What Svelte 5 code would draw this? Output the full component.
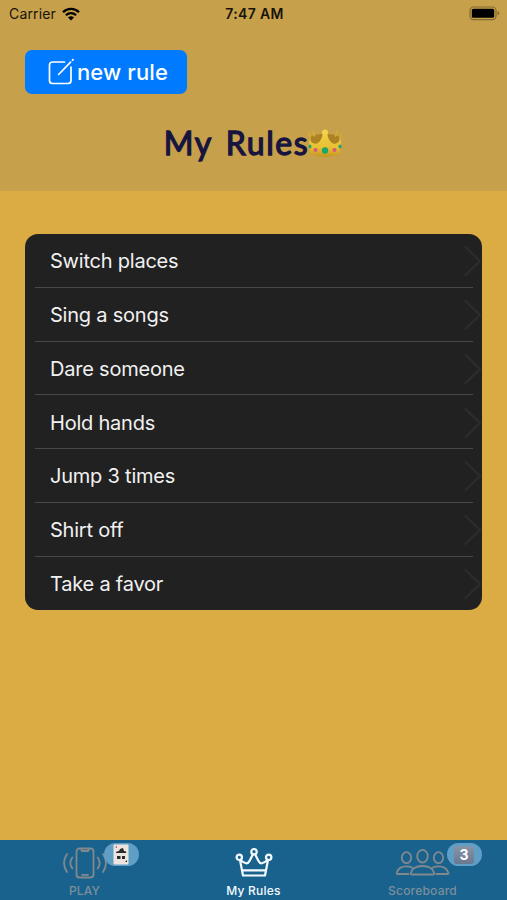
<script lang="ts">
  interface Rule {
    id: number;
    text: string;
  }

  type Tab = "play" | "rules" | "scoreboard";

  let rules: Rule[] = [
    { id: 1, text: "Switch places" },
    { id: 2, text: "Sing a songs" },
    { id: 3, text: "Dare someone" },
    { id: 4, text: "Hold hands" },
    { id: 5, text: "Jump 3 times" },
    { id: 6, text: "Shirt off" },
    { id: 7, text: "Take a favor" },
  ];

  let active = $state<Tab>("rules");
</script>

<div class="screen">
  <header>
    <div class="status">
      <div class="carrier">
        <span>Carrier</span>
        <svg class="wifi" viewBox="0 0 18 14" width="18" height="14">
          <path d="M1 5.2a11.3 11.3 0 0 1 16 0" />
          <path d="M3.9 8.2a7.2 7.2 0 0 1 10.2 0" />
          <path class="fill" d="M9 13.4 6 10.4a4.2 4.2 0 0 1 6 0z" />
        </svg>
      </div>
      <span class="time">7:47 AM</span>
      <svg class="battery" viewBox="0 0 31 15" width="31" height="15">
        <rect class="shell" x="1" y="1" width="26" height="12.6" rx="3.6" />
        <rect x="2.8" y="2.8" width="22.4" height="9" rx="1.6" />
        <path class="cap" d="M28.5 5v4.6q1.8-.8 1.8-2.3T28.5 5z" />
      </svg>
    </div>

    <button type="button" class="new-rule">
      <svg viewBox="0 0 28 28" width="28" height="28">
        <path d="M17.500 4H5.500a3 3 0 0 0-3 3v15.500a3 3 0 0 0 3 3H21a3 3 0 0 0 3-3V9" />
        <path d="m11.600 16.500 12-12.300M25.500 2.200l.6-.6" />
      </svg>
      <span>new rule</span>
    </button>

    <h1>
      <span class="title">My Rules</span>
      <svg class="crown" viewBox="0 0 36 32" width="36" height="32">
        <defs>
          <linearGradient id="gold" x1="0" y1="0" x2="0" y2="1">
            <stop offset="0" stop-color="#f0cf45" />
            <stop offset="0.6" stop-color="#e8c034" />
            <stop offset="1" stop-color="#c4951f" />
          </linearGradient>
        </defs>
        <path class="back" d="M3 9q6-3 12-3h6q6 0 12 3l-4 12H7z" />
        <path class="tips" d="M3.500 16 2.300 6M32.500 16l1.200-10M7.500 8 5.800 3M28.500 8l1.700-5" />
        <path
          fill="url(#gold)"
          d="M1.800 12q4.500 4.500 8.200 3.500 4.500-2 6-10.500h4q1.500 8.500 6 10.500 3.700 1 8.200-3.500L32.600 26q-14.600 6-29.200 0z"
        />
        <circle class="orb" cx="18" cy="4.600" r="3" />
        <circle class="green" cx="18" cy="22.500" r="3.200" />
        <circle class="pink" cx="8.500" cy="22" r="2" />
        <circle class="pink" cx="27.500" cy="22" r="2" />
        <ellipse class="green" cx="3" cy="18.500" rx="1.500" ry="2" />
        <ellipse class="green" cx="33" cy="18.500" rx="1.500" ry="2" />
      </svg>
    </h1>
  </header>

  <main>
    <ul class="rules">
      {#each rules as rule (rule.id)}
        <li>
          <span>{rule.text}</span>
          <svg class="chevron" viewBox="0 0 18 32" width="18" height="32">
            <path d="m1.500 2 14.500 14L1.500 30" />
          </svg>
        </li>
      {/each}
    </ul>
  </main>

  <nav>
    <button type="button" class:active={active === "play"} onclick={() => (active = "play")}>
      <span class="icon">
        <svg viewBox="0 0 46 32" width="46" height="32">
          <rect x="14.500" y="1.500" width="17" height="29" rx="3" />
          <path d="M19 2l.8 2h6.400l.8-2M20 27.800h6M10.300 10.500q-4 5.500 0 11M5 7q-6 9 0 18M35.700 10.500q4 5.500 0 11M41 7q6 9 0 18" />
        </svg>
        <span class="badge">
          <svg class="card" viewBox="0 0 16 21" width="16" height="21">
            <rect class="paper" x=".5" y=".5" width="15" height="20" rx="1" />
            <path class="ink" d="M3 9q0-2 3-2l1-2 3-1 1 3q3 0 2 2zM4 12h3.500v3H4zM9 12h3v3H9z" />
            <path class="red" d="m2 3 2-1v2z" />
            <path class="ink" d="m12 18 2-2v2z" />
          </svg>
        </span>
      </span>
      <span class="label">PLAY</span>
    </button>

    <button type="button" class:active={active === "rules"} onclick={() => (active = "rules")}>
      <span class="icon">
        <svg class="thick" viewBox="0 0 38 32" width="38" height="32">
          <path d="M5 13 8 28.500h22L33 13M5.500 13q6.500 6 9 1l3.300-6.500M32.500 13q-6.500 6-9 1l-3.300-6.500M7.200 23.300h23.600" />
          <circle cx="19" cy="4.700" r="2.700" />
          <circle cx="4.300" cy="10.300" r="2.700" />
          <circle cx="33.700" cy="10.300" r="2.700" />
        </svg>
      </span>
      <span class="label">My Rules</span>
    </button>

    <button
      type="button"
      class:active={active === "scoreboard"}
      onclick={() => (active = "scoreboard")}
    >
      <span class="icon">
        <svg viewBox="0 0 54 32" width="54" height="32">
          <ellipse cx="26.500" cy="9.200" rx="5.300" ry="6.300" />
          <ellipse cx="10.500" cy="10.700" rx="4.700" ry="5.500" />
          <ellipse cx="42.500" cy="10.700" rx="4.700" ry="5.500" />
          <path d="M16 27.500q-1.500 0-1.200-1.500C16 21.500 20.500 19 26.500 19s10.500 2.500 11.700 7q.3 1.500-1.200 1.500zM12.500 27h-11q-1.200 0-.8-1.500C2 21.500 5.500 19.300 10.500 19.300q3.200 0 5.500 1.200M40.500 27h11q1.200 0 .8-1.500c-1.300-4-4.800-6.200-9.800-6.200q-3.200 0-5.500 1.200" />
        </svg>
        <span class="badge wide"><span class="keycap">3</span></span>
      </span>
      <span class="label">Scoreboard</span>
    </button>
  </nav>
</div>

<style>
  :global(body) {
    margin: 0;
  }

  .screen {
    display: flex;
    flex-direction: column;
    height: 900px;
    background: #daac43;
    font-family: Inter, "Liberation Sans", sans-serif;
  }

  header {
    box-sizing: border-box;
    height: 191px;
    background: #c6a04a;
  }

  button {
    border: none;
    font: inherit;
    cursor: pointer;
  }

  svg {
    fill: none;
    stroke-linecap: round;
    stroke-linejoin: round;
  }

  .status {
    display: grid;
    grid-template-columns: 1fr auto 1fr;
    align-items: center;
    height: 27px;
    padding: 0 7px 0 9px;
    font-size: 14px;
    color: #17130a;
  }

  .carrier {
    display: flex;
    align-items: center;
    gap: 6px;
    letter-spacing: 0.15px;
  }

  .wifi path {
    stroke: #000;
    stroke-width: 2.3;
    stroke-linecap: butt;
  }

  .wifi .fill {
    fill: #000;
    stroke: none;
  }

  .time {
    font-weight: 600;
    letter-spacing: 0.35px;
  }

  .battery {
    justify-self: end;
    fill: #000;
  }

  .battery .shell {
    fill: none;
    stroke: #846b33;
    stroke-width: 1.2;
  }

  .battery .cap {
    fill: #846b33;
  }

  .new-rule {
    display: flex;
    align-items: center;
    gap: 2px;
    width: 162px;
    height: 44px;
    margin: 23px 0 0 25px;
    padding: 0 0 0 22px;
    border-radius: 7px;
    background: #007aff;
    color: #fff;
    font-size: 22px;
    font-weight: 500;
    letter-spacing: 0.1px;
    white-space: nowrap;
  }

  .new-rule svg {
    flex-shrink: 0;
    stroke: #fff;
    stroke-width: 1.7;
  }

  h1 {
    display: flex;
    align-items: center;
    justify-content: center;
    height: 44px;
    margin: 26px 0 0;
  }

  .title {
    font-family: "Chalkboard SE", Lato, sans-serif;
    font-size: 32px;
    font-weight: 400;
    letter-spacing: 1.6px;
    word-spacing: 4px;
    color: #17143f;
    -webkit-text-stroke: 1.3px #17143f;
  }

  .crown {
    margin: 4px 0 0 -2px;
  }

  .crown .back {
    fill: #ad8222;
  }

  .crown .tips {
    stroke: #d8ae32;
    stroke-width: 1.6;
  }

  .crown .orb {
    fill: #f1d34c;
  }

  .crown .green {
    fill: #1fa36f;
  }

  .crown .pink {
    fill: #d9577c;
  }

  main {
    flex: 1;
    padding: 43px 25px 0;
  }

  .rules {
    margin: 0;
    padding: 0;
    list-style: none;
    overflow: hidden;
    border-radius: 13px;
    background: #212121;
  }

  li {
    display: flex;
    align-items: center;
    justify-content: space-between;
    box-sizing: border-box;
    height: 53.75px;
    padding: 1px 0 0 25px;
    font-size: 20px;
    letter-spacing: -0.22px;
    color: #f1f1f1;
    background: linear-gradient(#484848, #484848) no-repeat 10px 100% / calc(100% - 19px) 1px;
  }

  li:last-child {
    background: none;
  }

  .chevron {
    stroke: #2b2b2b;
    stroke-width: 2.5;
  }

  nav {
    display: grid;
    grid-template-columns: repeat(3, 1fr);
    height: 60px;
    background: #19628e;
  }

  nav button {
    display: flex;
    flex-direction: column;
    align-items: center;
    padding: 7px 0 0;
    background: transparent;
    color: #7c8f9b;
  }

  nav button.active {
    color: #f4faff;
  }

  .icon {
    position: relative;
    height: 32px;
  }

  .icon > svg {
    display: block;
    stroke: #82898d;
    stroke-width: 1.8;
  }

  .active .icon > svg {
    stroke: currentColor;
  }

  .icon > .thick {
    stroke-width: 2.2;
  }

  .label {
    margin-top: 4px;
    font-size: 12px;
    font-weight: 500;
    line-height: 15px;
    letter-spacing: 0.2px;
  }

  .badge {
    position: absolute;
    top: -4px;
    left: calc(50% + 19px);
    display: flex;
    align-items: center;
    justify-content: center;
    width: 35px;
    height: 23px;
    border-radius: 12px;
    background: #5f9fc6;
  }

  .badge.wide {
    left: calc(50% + 24px);
  }

  .card .paper {
    fill: #ece5df;
  }

  .card .ink {
    fill: #2b2b2d;
  }

  .card .red {
    fill: #c8455a;
  }

  .keycap {
    width: 20px;
    height: 18px;
    border-radius: 3px;
    background: linear-gradient(#8795a8, #68788f);
    color: #fff;
    font-size: 14px;
    font-weight: 700;
    line-height: 18px;
    text-align: center;
  }
</style>
